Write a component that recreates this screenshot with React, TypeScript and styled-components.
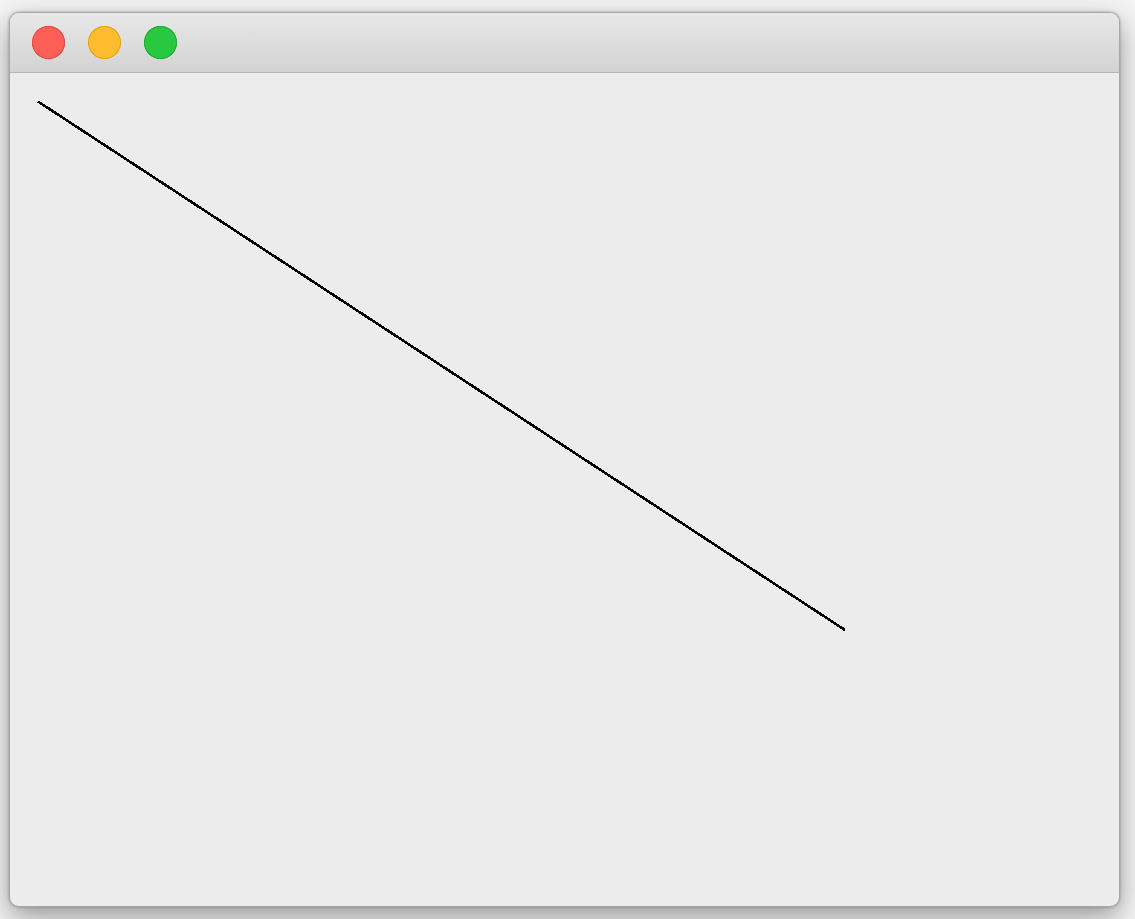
import React from 'react'
import styled, { createGlobalStyle } from 'styled-components'

const GlobalStyle = createGlobalStyle`
  html, body {
    margin: 0;
    padding: 0;
    background: #f4f4f4;
    font-family: "Liberation Sans", Arial, sans-serif;
  }
`

const Page = styled.div`
  width: 1135px;
  height: 919px;
  padding: 12px 15px 12px 9px;
  box-sizing: border-box;
  overflow: hidden;
`

const Window = styled.div`
  width: 1111px;
  height: 895px;
  display: flex;
  flex-direction: column;
  border-radius: 10px;
  border: 1px solid #a8a8a8;
  box-sizing: border-box;
  overflow: hidden;
  background: #ececec;
  box-shadow: 0 10px 28px rgba(0, 0, 0, 0.38), 0 0 3px rgba(0, 0, 0, 0.3);
`

const TitleBar = styled.div`
  height: 60px;
  flex: none;
  display: flex;
  align-items: center;
  gap: 23px;
  padding-left: 22px;
  box-sizing: border-box;
  background: linear-gradient(#e8e8e8, #d3d3d3);
  border-bottom: 1px solid #b5b5b5;
`

const Light = styled.span<{ $fill: string; $edge: string }>`
  width: 33px;
  height: 33px;
  border-radius: 50%;
  background: ${p => p.$fill};
  box-shadow: inset 0 0 0 1px ${p => p.$edge};
`

const Content = styled.div`
  flex: 1;
  position: relative;
`

const Canvas = styled.svg`
  display: block;
  width: 100%;
  height: 100%;
`

function App() {
  return (
    <Page>
      <GlobalStyle />
      <Window>
        <TitleBar>
          <Light $fill="#fe5f57" $edge="#e2463f" />
          <Light $fill="#febc2e" $edge="#e1a116" />
          <Light $fill="#28c840" $edge="#1aab29" />
        </TitleBar>
        <Content>
          <Canvas>
            <line
              x1="28"
              y1="28.5"
              x2="835"
              y2="557"
              stroke="#000"
              strokeWidth="2.6"
              shapeRendering="crispEdges"
            />
          </Canvas>
        </Content>
      </Window>
    </Page>
  )
}

export default App
